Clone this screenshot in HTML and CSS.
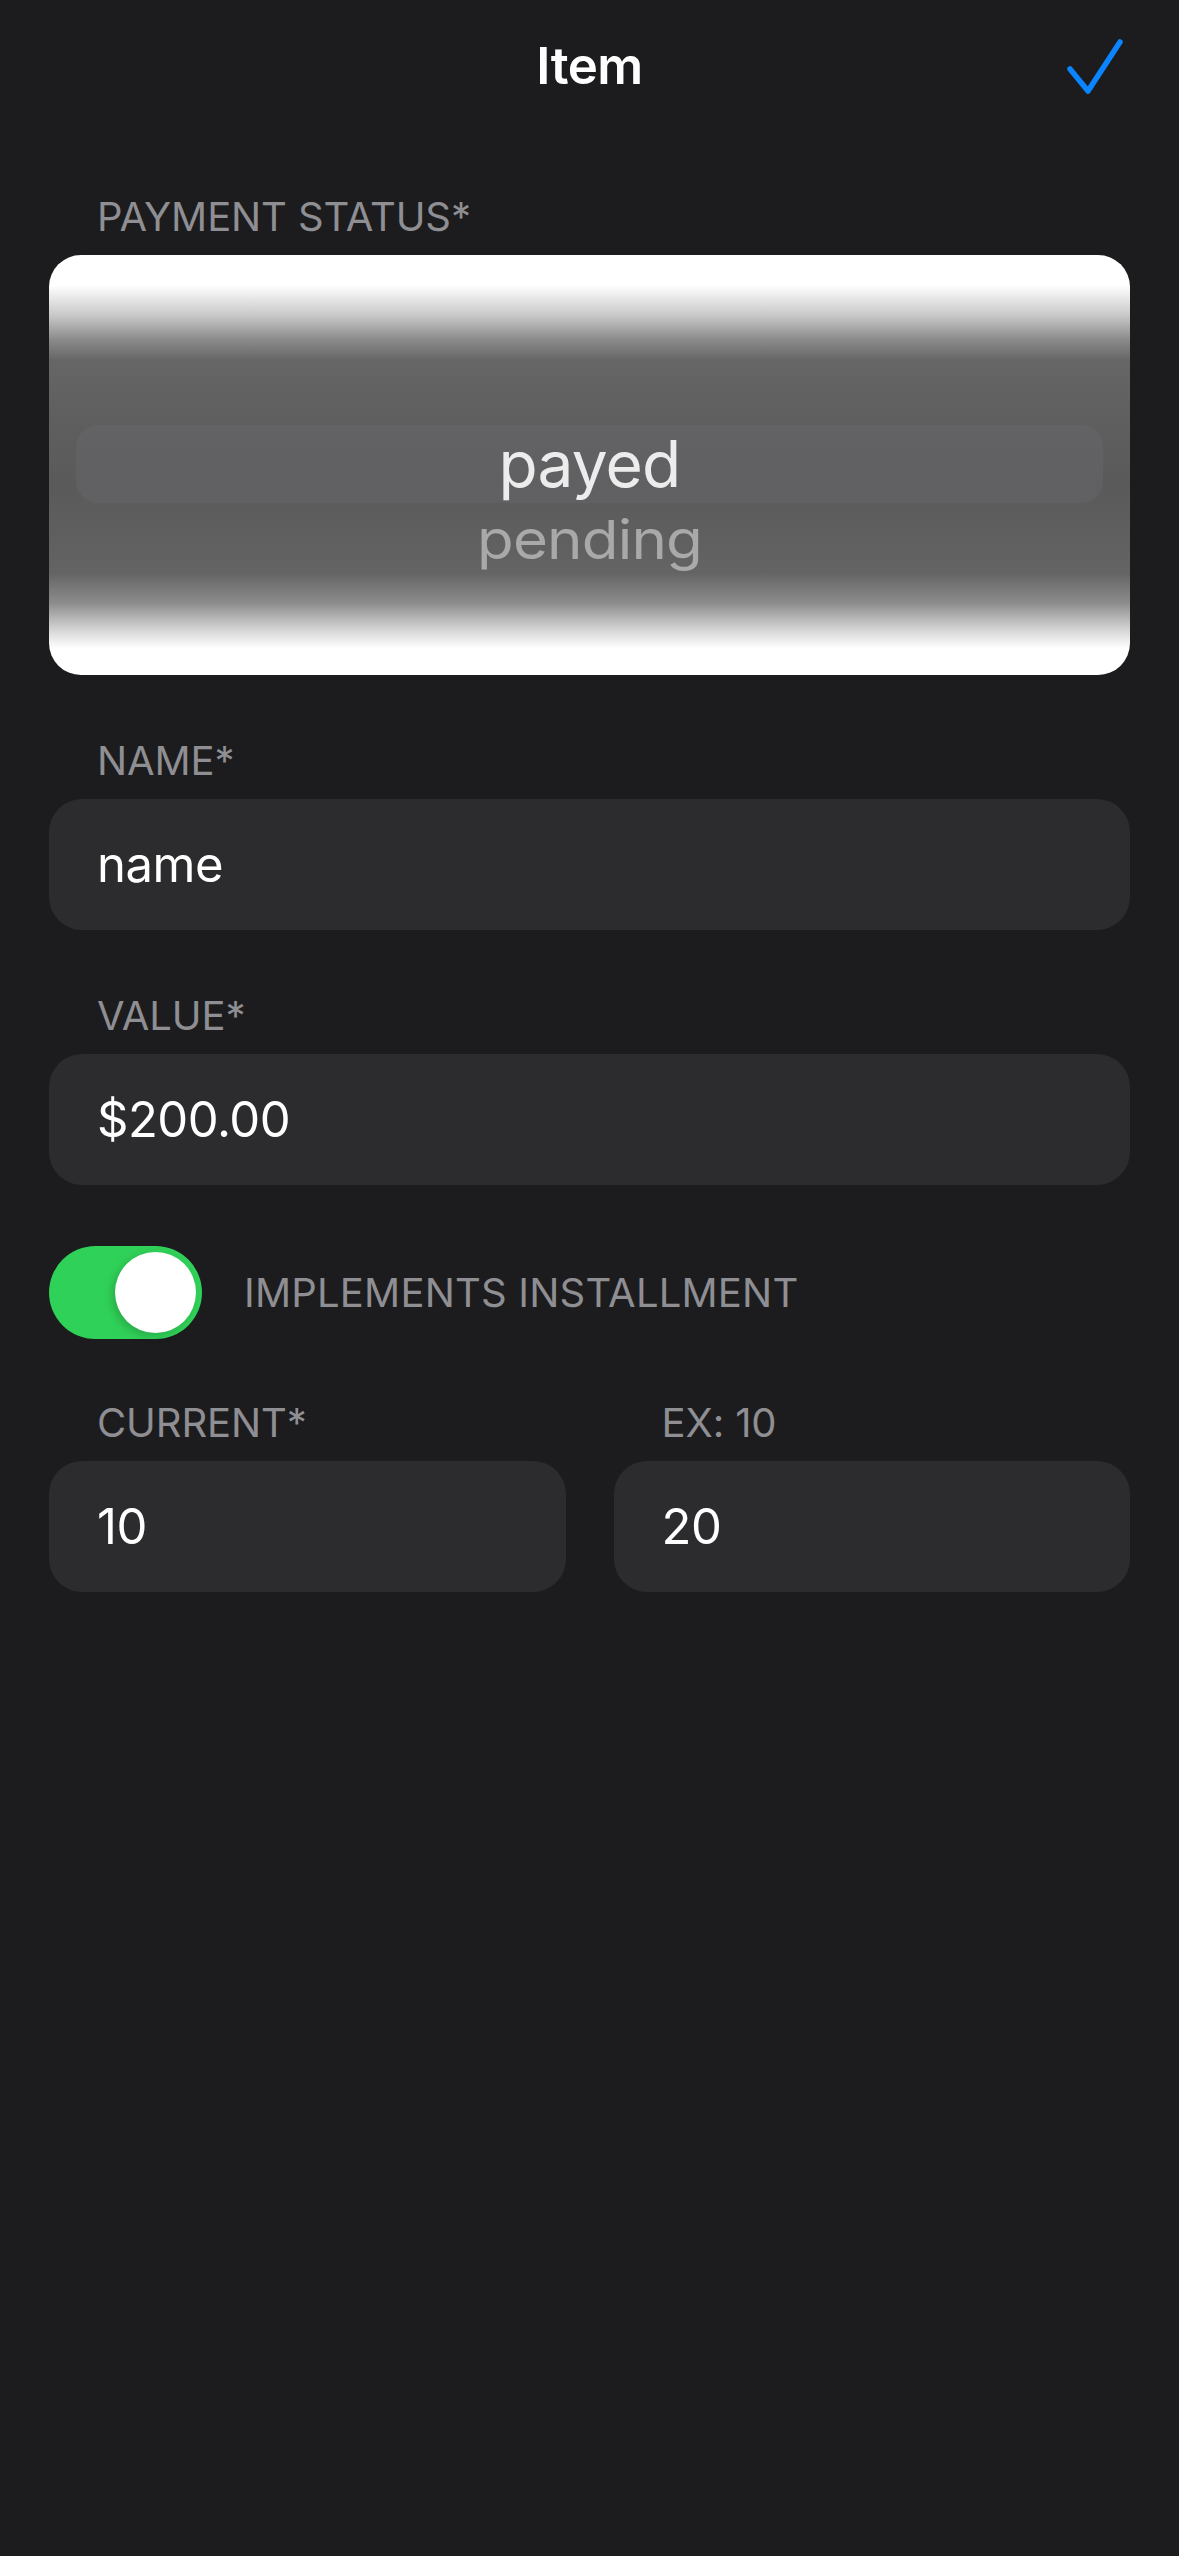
FILE: index.html
```html
<!DOCTYPE html>
<html lang="en">
<head>
<meta charset="utf-8">
<title>Item</title>
<link rel="stylesheet" href="styles.css">
</head>
<body>
<div class="screen">
  <header class="nav">
    <div class="nav-side"></div>
    <h1 class="nav-title">Item</h1>
    <div class="nav-side nav-right">
      <svg class="check" width="60" height="60" viewBox="0 0 60 60" aria-label="Done">
        <path d="M5 33 L23 55 L55 6" fill="none" stroke="#0a84ff" stroke-width="5.5" stroke-linecap="round" stroke-linejoin="round"/>
      </svg>
    </div>
  </header>

  <main class="form">
    <section class="group group-first">
      <div class="label">PAYMENT STATUS*</div>
      <div class="picker">
        <div class="picker-row selected">payed</div>
        <div class="picker-row other">pending</div>
      </div>
    </section>

    <section class="group">
      <div class="label">NAME*</div>
      <div class="field">name</div>
    </section>

    <section class="group">
      <div class="label">VALUE*</div>
      <div class="field">$200.00</div>
    </section>

    <section class="group toggle-row">
      <div class="switch"><div class="knob"></div></div>
      <div class="toggle-label">IMPLEMENTS INSTALLMENT</div>
    </section>

    <section class="group pair">
      <div class="col">
        <div class="label">CURRENT*</div>
        <div class="field">10</div>
      </div>
      <div class="col">
        <div class="label">EX: 10</div>
        <div class="field">20</div>
      </div>
    </section>
  </main>
</div>
</body>
</html>
```

FILE: styles.css
```css
* { box-sizing: border-box; }

html, body {
  margin: 0;
  padding: 0;
  background: #1c1c1e;
}

body {
  font-family: Inter, "Noto Sans", "Liberation Sans", sans-serif;
  color: #ffffff;
}

.screen {
  width: 1179px;
  min-height: 2556px;
  background: #1c1c1e;
}

.nav {
  height: 132px;
  display: grid;
  grid-template-columns: 1fr auto 1fr;
  align-items: center;
}

.nav-title {
  margin: 0;
  font-size: 51px;
  font-weight: 600;
  line-height: 60px;
  color: #ffffff;
  letter-spacing: -0.5px;
}

.nav-right {
  display: flex;
  justify-content: flex-end;
  padding-right: 54px;
}

.check { display: block; }

.form {
  padding: 0 49px;
}

.group {
  margin-top: 62px;
}

.group-first {
  margin-top: 61px;
}

.label {
  font-size: 40px;
  line-height: 48px;
  color: #8e8e93;
  padding-left: 48px;
  margin-bottom: 14px;
  letter-spacing: -0.1px;
}

.field {
  height: 131px;
  border-radius: 33px;
  background: #2c2c2e;
  display: flex;
  align-items: center;
  padding-left: 48px;
  font-size: 49px;
  color: #ffffff;
  letter-spacing: -0.5px;
}

.picker {
  height: 420px;
  border-radius: 32px;
  padding: 170px 27px 0;
  background: linear-gradient(to bottom,
    #ffffff 0px,
    #ffffff 30px,
    #c9c9c9 60px,
    #8a8a8a 85px,
    #666666 105px,
    #5f5f5f 160px,
    #5a5a5a 230px,
    #606060 290px,
    #646464 318px,
    #8c8c8c 348px,
    #d0d0d0 373px,
    #ffffff 393px,
    #ffffff 420px);
  overflow: hidden;
}

.picker-row {
  text-align: center;
}

.picker-row.selected {
  height: 78px;
  line-height: 78px;
  border-radius: 22px;
  background: rgba(120, 120, 128, 0.22);
  font-size: 64px;
  color: #ececec;
  letter-spacing: -0.8px;
}

.picker-row.other {
  height: 76px;
  line-height: 80px;
  font-size: 60px;
  color: #a9a9a9;
  letter-spacing: -0.8px;
  transform: scaleY(0.9);
  transform-origin: top center;
}

.toggle-row {
  margin-top: 61px;
  display: flex;
  align-items: center;
  gap: 42px;
}

.switch {
  width: 153px;
  height: 93px;
  border-radius: 47px;
  background: #30d158;
  display: flex;
  align-items: center;
  justify-content: flex-end;
  padding-right: 6px;
  flex: none;
}

.knob {
  width: 81px;
  height: 81px;
  border-radius: 50%;
  background: #ffffff;
  box-shadow: -3px 3px 8px rgba(0, 0, 0, 0.18);
}

.toggle-label {
  font-size: 40px;
  line-height: 48px;
  color: #8e8e93;
  letter-spacing: 0.2px;
}

.pair {
  margin-top: 60px;
  display: grid;
  grid-template-columns: 1fr 1fr;
  gap: 48px;
}
```
